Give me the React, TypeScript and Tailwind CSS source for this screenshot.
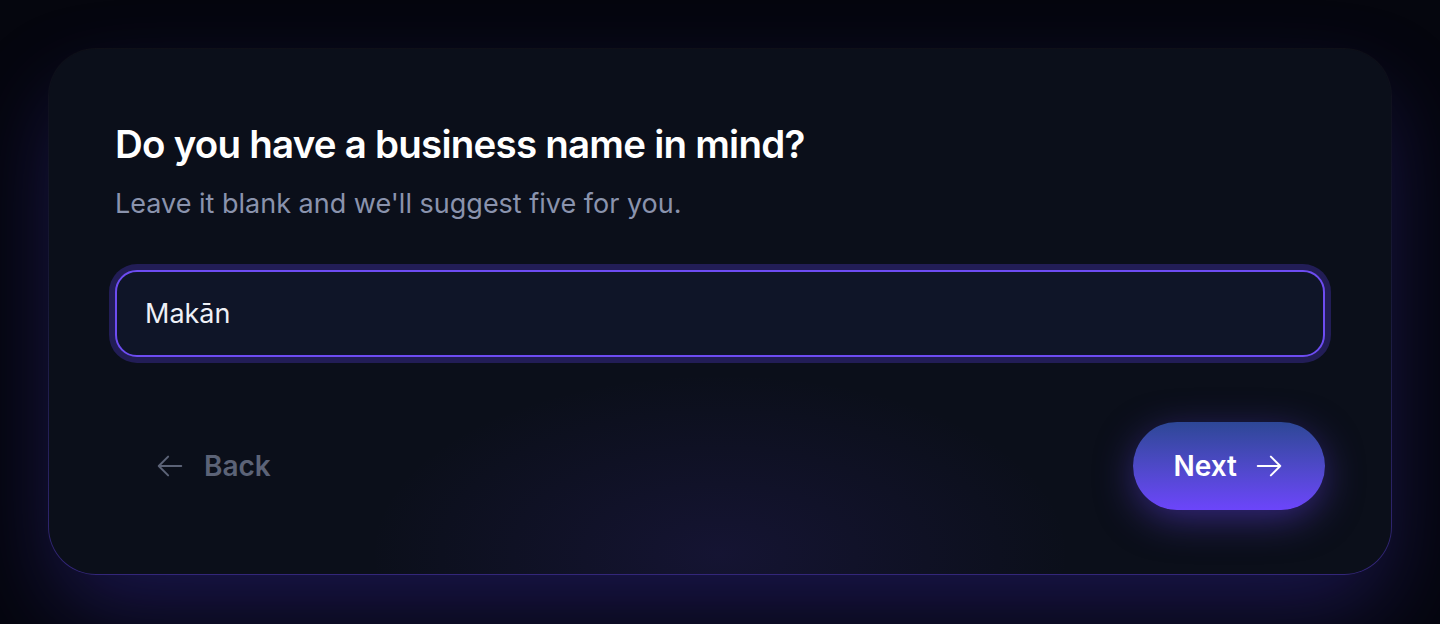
import { useState } from 'react';

// heroicons-style arrows: wider than tall, like the ones in the design
function Arrow({ dir }: { dir: 'left' | 'right' }) {
  return (
    <svg width="30" height="30" viewBox="0 0 24 24" fill="none" stroke="currentColor" strokeWidth={1.6} strokeLinecap="round" strokeLinejoin="round">
      {dir === 'right' ? <path d="M13.5 4.5 21 12m0 0-7.5 7.5M21 12H3" /> : <path d="M10.5 19.5 3 12m0 0 7.5-7.5M3 12h18" />}
    </svg>
  );
}

export default function App() {
  const [name, setName] = useState('Makān');

  return (
    <div
      className="min-h-[624px] w-full overflow-hidden bg-[#05060e] pt-12 px-12"
      style={{ fontFamily: 'Inter, "Noto Sans", sans-serif' }}
    >
      {/* card with gradient hairline border */}
      <div className="rounded-[48px] bg-gradient-to-b from-white/[0.04] via-[#191a3a] to-[#33267a] p-px shadow-[0_40px_90px_-10px_rgba(70,55,200,0.35)]">
        <div className="relative overflow-hidden rounded-[47px] bg-[#0b0f1a] px-[66px] pt-[73px] pb-[64px]">
          {/* soft glow near the bottom */}
          <div className="pointer-events-none absolute left-1/2 bottom-[-160px] h-[360px] w-[700px] -translate-x-1/2 rounded-full bg-[radial-gradient(closest-side,rgba(80,50,200,0.14),transparent)]" />

          <div className="relative">
            <h1 className="text-[38.5px] font-semibold leading-[44px] tracking-[-0.02em] text-white">
              Do you have a business name in mind?
            </h1>
            <p className="mt-[22px] text-[27px] leading-8 text-[#8a93ad]">
              Leave it blank and we'll suggest five for you.
            </p>

            <input
              value={name}
              onChange={(e) => setName(e.target.value)}
              className="mt-[50px] block h-[87px] w-full rounded-[22px] border-2 border-[#6d4cf2] bg-[#0f1528] px-[28px] text-[27px] text-[#eef0f6] outline-none ring-[6px] ring-[#221d56]"
            />

            <div className="mt-[65px] flex items-center justify-between">
              <button className="flex h-[88px] items-center gap-[19px] rounded-full pl-10 pr-10 text-[28px] font-semibold text-[#5c6377]">
                <Arrow dir="left" />
                Back
              </button>
              <button className="flex h-[88px] items-center gap-[17px] rounded-full bg-gradient-to-b from-[#2d4796] to-[#6c45fb] pl-[41px] pr-[41px] text-[28px] font-semibold text-white shadow-[0_10px_40px_-4px_rgba(108,69,251,0.5)]">
                Next
                <Arrow dir="right" />
              </button>
            </div>
          </div>
        </div>
      </div>
    </div>
  );
}
